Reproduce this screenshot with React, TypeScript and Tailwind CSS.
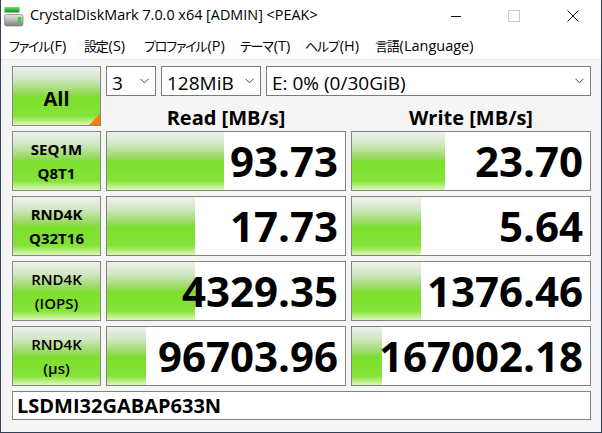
import React from "react";

const GREEN =
  "bg-[linear-gradient(180deg,#eef1ec_0%,#d3e7c7_20%,#98da60_44%,#7ddf2d_52%,#84e338_84%,#dcf8b8_100%)]";

type Row = {
  l1: string;
  l2: string;
  strong: boolean;
  read: string;
  readBar: number;
  write: string;
  writeBar: number;
};

const rows: Row[] = [
  { l1: "SEQ1M", l2: "Q8T1", strong: true, read: "93.73", readBar: 117, write: "23.70", writeBar: 93 },
  { l1: "RND4K", l2: "Q32T16", strong: true, read: "17.73", readBar: 88, write: "5.64", writeBar: 69 },
  { l1: "RND4K", l2: "(IOPS)", strong: false, read: "4329.35", readBar: 88, write: "1376.46", writeBar: 69 },
  { l1: "RND4K", l2: "(µs)", strong: false, read: "96703.96", readBar: 39, write: "167002.18", writeBar: 30 },
];

const menu = [
  { jp: "ファイル", key: "(F)", w: "w-[75px]" },
  { jp: "設定", key: "(S)", w: "w-[60px]" },
  { jp: "プロファイル", key: "(P)", w: "w-[96px]" },
  { jp: "テーマ", key: "(T)", w: "w-[65px]" },
  { jp: "ヘルプ", key: "(H)", w: "w-[70px]" },
  { jp: "言語", key: "(Language)", w: "" },
];

function AppIcon() {
  return (
    <svg width="20" height="21" viewBox="0 0 20 21">
      <defs>
        <linearGradient id="bar" x1="0" y1="0" x2="0" y2="1">
          <stop offset="0" stopColor="#7fe07f" />
          <stop offset="0.5" stopColor="#2fb52f" />
          <stop offset="1" stopColor="#1a8a1a" />
        </linearGradient>
        <linearGradient id="drive" x1="0" y1="0" x2="0" y2="1">
          <stop offset="0" stopColor="#e4e4e4" />
          <stop offset="0.45" stopColor="#bdbdbd" />
          <stop offset="1" stopColor="#7c7c7c" />
        </linearGradient>
      </defs>
      <rect x="0.5" y="1" width="15" height="5.5" fill="url(#bar)" />
      <rect x="0.5" y="8.5" width="18.5" height="11.5" rx="2" fill="url(#drive)" stroke="#8a8a8a" strokeWidth="0.8" />
      <rect x="14" y="11" width="3" height="6" fill="#3ecf3e" />
    </svg>
  );
}

function Chevron() {
  return (
    <svg width="9" height="6" viewBox="0 0 9 6" className="shrink-0">
      <path d="M0.5 0.8 L4.5 4.8 L8.5 0.8" fill="none" stroke="#444" strokeWidth="1" />
    </svg>
  );
}

function Select({ value, width }: { value: string; width: string }) {
  return (
    <div
      className={`${width} h-[30px] shrink-0 border border-[#7a7a7a] bg-white flex items-center justify-between pl-[5px] pr-[6px]`}
    >
      <span className="text-[19px] leading-[28px] pt-[3px] text-black">{value}</span>
      <Chevron />
    </div>
  );
}

function ResultCell({ value, bar }: { value: string; bar: number }) {
  return (
    <div className="relative h-[60px] border border-[#828282] bg-white overflow-hidden">
      <div className={`absolute left-0 top-0 bottom-0 ${GREEN}`} style={{ width: bar }} />
      <div className="relative text-right pr-[7px] text-[42px] leading-[58px] font-bold text-black">
        {value}
      </div>
    </div>
  );
}

export default function App() {
  return (
    <div
      className="w-[602px] h-[433px] flex flex-col bg-[#f5f5f5] border-l border-r border-b border-[#2f4358] overflow-hidden"
      style={{ fontFamily: '"Open Sans", "Noto Sans CJK JP", sans-serif' }}
    >
      {/* title bar */}
      <div className="h-[31px] shrink-0 bg-white flex items-center">
        <div className="pl-[3px] pr-[6px] pt-[1px]">
          <AppIcon />
        </div>
        <span className="text-[14.4px] text-black leading-none">
          CrystalDiskMark 7.0.0 x64 [ADMIN] &lt;PEAK&gt;
        </span>
        <div className="ml-auto flex items-center h-full">
          <div className="w-[58px] h-full flex items-center justify-center">
            <svg width="12" height="12" viewBox="0 0 12 12">
              <path d="M1 6.5 H11" stroke="#111" strokeWidth="1" />
            </svg>
          </div>
          <div className="w-[58px] h-full flex items-center justify-center">
            <svg width="12" height="12" viewBox="0 0 12 12">
              <rect x="0.5" y="0.5" width="11" height="11" fill="none" stroke="#c8c8c8" strokeWidth="1" />
            </svg>
          </div>
          <div className="w-[58px] h-full flex items-center justify-center pl-[2px]">
            <svg width="12" height="12" viewBox="0 0 12 12">
              <path d="M0.5 0.5 L11.5 11.5 M11.5 0.5 L0.5 11.5" stroke="#111" strokeWidth="1" />
            </svg>
          </div>
        </div>
      </div>

      {/* menu bar */}
      <div className="h-[28px] shrink-0 bg-white flex items-center pl-[8px] text-black">
        {menu.map((m) => (
          <div key={m.jp} className={`${m.w} shrink-0 leading-none whitespace-nowrap`}>
            <span className="text-[13px] tracking-[-1.2px] [font-feature-settings:'palt']">{m.jp}</span>
            <span className="text-[14.5px] pl-[1px]">{m.key}</span>
          </div>
        ))}
      </div>
      <div className="h-px shrink-0 bg-[#e8e8e8]" />

      {/* client area */}
      <div className="flex-1 pl-[11px] pt-[6px]">
        <div className="grid grid-cols-[89px_240px_240px] gap-[5px]">
          {/* controls row */}
          <div className={`relative h-[60px] border border-[#888] ${GREEN} flex items-center justify-center`}>
            <span className="text-[20px] font-bold text-black leading-none pt-[5px]">All</span>
            <div className="absolute right-0 bottom-0 w-0 h-0 border-l-[11px] border-l-transparent border-b-[11px] border-b-[#ff7a00]" />
          </div>
          <div className="col-span-2 flex flex-col">
            <div className="flex gap-[5px]">
              <Select value="3" width="w-[50px]" />
              <Select value="128MiB" width="w-[100px]" />
              <Select value="E: 0% (0/30GiB)" width="flex-1" />
            </div>
            <div className="grid grid-cols-2 gap-[5px] h-[30px] items-end">
              <div className="text-center text-[20px] font-bold leading-[20px] text-black translate-y-[2px]">
                Read [MB/s]
              </div>
              <div className="text-center text-[20px] font-bold leading-[20px] text-black translate-y-[2px]">
                Write [MB/s]
              </div>
            </div>
          </div>

          {/* result rows */}
          {rows.map((r, i) => (
            <React.Fragment key={i}>
              <div
                className={`h-[60px] border border-[#888] ${GREEN} flex flex-col items-center justify-center text-[15px] leading-[24px] text-black ${
                  r.strong ? "font-bold" : "font-semibold"
                }`}
              >
                <span>{r.l1}</span>
                <span>{r.l2}</span>
              </div>
              <ResultCell value={r.read} bar={r.readBar} />
              <ResultCell value={r.write} bar={r.writeBar} />
            </React.Fragment>
          ))}

          {/* drive name */}
          <div className="col-span-3 h-[29px] border border-[#828282] bg-white flex items-center pl-[4px]">
            <span className="text-[20px] font-bold leading-none text-black pt-[1px]">LSDMI32GABAP633N</span>
          </div>
        </div>
      </div>
    </div>
  );
}
